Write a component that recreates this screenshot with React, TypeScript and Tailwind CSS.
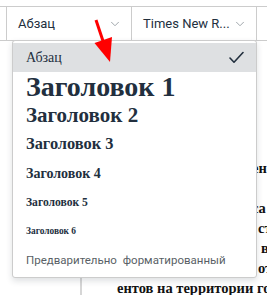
import { ChevronDown } from 'lucide-react';

const items = [
  { label: 'Заголовок 1', cls: 'text-[28px] font-bold' },
  { label: 'Заголовок 2', cls: 'text-[21px] font-bold' },
  { label: 'Заголовок 3', cls: 'text-[16.4px] font-bold' },
  { label: 'Заголовок 4', cls: 'text-[14px] font-bold' },
  { label: 'Заголовок 5', cls: 'text-[11.6px] font-bold' },
  { label: 'Заголовок 6', cls: 'text-[9.4px] font-bold' },
];

// bits of document text that peek out to the right of the menu
const docLines = [
  { text: '', pad: 0 },
  { text: '', pad: 0 },
  { text: '', pad: 0 },
  { text: '', pad: 0 },
  { text: '', pad: 0 },
  { text: 'ен', pad: 170 },
  { text: '', pad: 0 },
  { text: 'са', pad: 170 },
  { text: 'ст', pad: 176 },
  { text: 'в', pad: 179 },
  { text: 'от', pad: 176 },
  { text: 'ентов на территории города', pad: 35 },
];

export default function App() {
  return (
    <div className="relative w-[267px] h-[295px] overflow-hidden bg-white font-['Roboto',sans-serif] text-[#222f3e]">
      {/* Toolbar */}
      <div className="h-[7px] border-b border-[#cccccc]" />
      <div className="flex h-[34px] border-b border-[#cccccc]">
        <div className="w-[7px] shrink-0 border-r border-[#cccccc]" />
        <div className="flex w-[125px] shrink-0 items-center justify-between border-r border-[#cccccc] pl-[11px] pr-[9px]">
          <span className="whitespace-nowrap text-[13px]">Абзац</span>
          <ChevronDown className="h-[14px] w-[14px] text-[#9aa0a6]" strokeWidth={1.6} />
        </div>
        <div className="flex w-[125px] shrink-0 items-center justify-between border-r border-[#cccccc] pl-[11px] pr-[9px]">
          <span className="whitespace-nowrap text-[13px]">Times New R...</span>
          <ChevronDown className="h-[14px] w-[14px] text-[#9aa0a6]" strokeWidth={1.6} />
        </div>
      </div>

      {/* Document */}
      <div className="flex h-[254px]">
        <div className="w-[80px] shrink-0" />
        <div className="min-w-0 flex-1 overflow-hidden border-l-2 border-[#d6d6d6] pt-[17px] font-['Liberation_Serif',serif] text-[14.5px] font-bold leading-[20px] text-[#111111]">
          {docLines.map((l, i) => (
            <div key={i} className="h-[20px] whitespace-nowrap" style={{ paddingLeft: l.pad }}>
              {l.text}
            </div>
          ))}
        </div>
      </div>

      {/* Format menu */}
      <div className="absolute left-[12px] top-[40px] w-[245px] rounded-[3px] border border-[#cccccc] bg-white py-[2px] shadow-[0_3px_6px_rgba(34,47,62,0.15)]">
        <div className="flex h-[29px] items-center justify-between bg-[#dee0e2] pl-[13px] pr-[12px] font-['Liberation_Serif',serif] text-[14px]">
          <span>Абзац</span>
          <svg width="15" height="13" viewBox="0 0 15 13" fill="none">
            <polyline points="1,7 5,11.2 14,1.5" stroke="#222f3e" strokeWidth="1.6" strokeLinecap="round" strokeLinejoin="round" />
          </svg>
        </div>
        {items.map(it => (
          <div key={it.label} className={`flex h-[29px] items-center whitespace-nowrap pl-[13px] font-['Liberation_Serif',serif] leading-none ${it.cls}`}>
            {it.label}
          </div>
        ))}
        <div className="flex h-[29px] items-center whitespace-nowrap pl-[13px] text-[11.5px] text-[#595f66] [word-spacing:3px]">
          Предварительно форматированный
        </div>
      </div>

      {/* Red annotation arrow */}
      <svg className="absolute left-0 top-0" width="267" height="295" viewBox="0 0 267 295">
        <line x1="96" y1="20" x2="104" y2="44" stroke="#ff0000" strokeWidth="3" />
        <polygon points="94.5,43 112,37 110,62" fill="#ff0000" />
      </svg>
    </div>
  );
}
